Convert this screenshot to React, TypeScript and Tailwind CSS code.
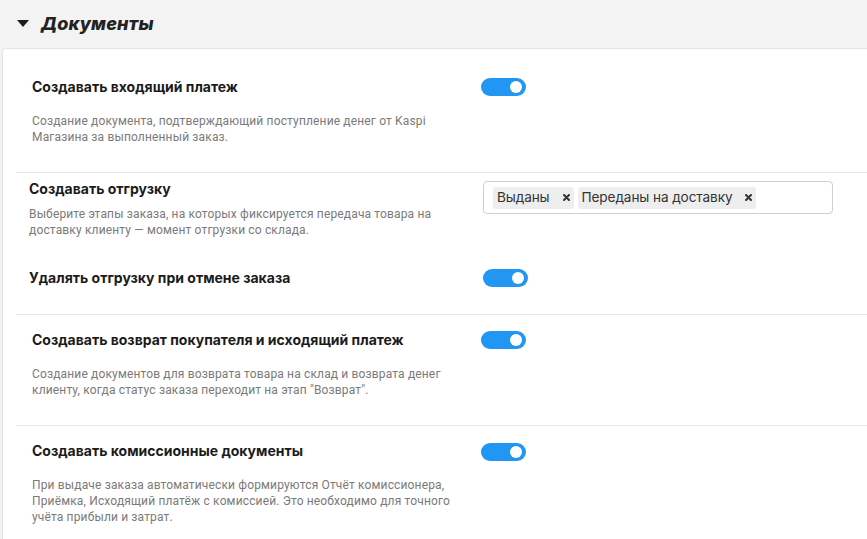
function Toggle() {
  return (
    <div className="w-[45px] h-[18px] rounded-full bg-[#2196f3] flex items-center justify-end pr-[4px] shrink-0">
      <div className="w-[12px] h-[12px] rounded-full bg-white" />
    </div>
  );
}

function Tag({ label }: { label: string }) {
  return (
    <div className="h-[22px] flex items-center bg-[#eeeeee] rounded-[3px] pl-[4px] pr-[4px]">
      <span className="text-[13.6px] text-[#333] tracking-[-0.1px]">{label}</span>
      <svg width="7" height="7" viewBox="0 0 7 7" className="ml-[13px]">
        <path d="M1 1 L6 6 M6 1 L1 6" stroke="#333" strokeWidth="2" strokeLinecap="round" />
      </svg>
    </div>
  );
}

const title = 'text-[14px] leading-[18px] font-bold text-[#1b1b1b]';
const desc = "font-['Roboto',_sans-serif] text-[12px] leading-[16px] tracking-[0.15px] text-[#7a7a7a]";

export default function App() {
  return (
    <div className="min-h-[539px] bg-[#f3f3f3] font-['Inter',_sans-serif] overflow-hidden">
      {/* Section header */}
      <div className="h-[48px] flex items-center pl-[17px] pb-[1px]">
        <svg width="12" height="7" viewBox="0 0 12 7" className="mr-[12px]">
          <path d="M0 0 L12 0 L6 7 Z" fill="#1e1e1e" />
        </svg>
        <h2 className="text-[18px] font-extrabold italic text-[#222] tracking-[0.2px]">Документы</h2>
      </div>

      {/* Panel */}
      <div className="ml-[2px] bg-white border-l border-t border-[#e4e4e4] rounded-tl-[4px] pl-[13px] pb-[20px]">
        {/* Row 1 */}
        <div className="flex pl-[16px] pt-[29px] pb-[27px] border-b border-[#e8e8e8]">
          <div className="w-[449px] shrink-0">
            <div className={title}>Создавать входящий платеж</div>
            <p className={`mt-[17px] ${desc}`}>
              Создание документа, подтверждающий поступление денег от Kaspi
              <br />
              Магазина за выполненный заказ.
            </p>
          </div>
          <Toggle />
        </div>

        {/* Row 2 */}
        <div className="flex pl-[13px] pt-[7px]">
          <div className="w-[454px] shrink-0">
            <div className={title}>Создавать отгрузку</div>
            <p className={`mt-[8px] ${desc}`}>
              Выберите этапы заказа, на которых фиксируется передача товара на
              <br />
              доставку клиенту — момент отгрузки со склада.
            </p>
          </div>
          <div className="mt-[1px] w-[350px] h-[33px] border border-[#cfcfcf] rounded-[4px] flex items-center gap-[4px] pl-[9px]">
            <Tag label="Выданы" />
            <Tag label="Переданы на доставку" />
          </div>
        </div>

        {/* Row 3 */}
        <div className="flex pl-[13px] pt-[31px] pb-[27px] border-b border-[#e8e8e8]">
          <div className="w-[454px] shrink-0">
            <div className={title}>Удалять отгрузку при отмене заказа</div>
          </div>
          <Toggle />
        </div>

        {/* Row 4 */}
        <div className="flex pl-[16px] pt-[16px] pb-[27px] border-b border-[#e8e8e8]">
          <div className="w-[449px] shrink-0">
            <div className={title}>Создавать возврат покупателя и исходящий платеж</div>
            <p className={`mt-[17px] ${desc}`}>
              Создание документов для возврата товара на склад и возврата денег
              <br />
              клиенту, когда статус заказа переходит на этап "Возврат".
            </p>
          </div>
          <Toggle />
        </div>

        {/* Row 5 */}
        <div className="flex pl-[16px] pt-[16px]">
          <div className="w-[449px] shrink-0">
            <div className={title}>Создавать комиссионные документы</div>
            <p className={`mt-[17px] ${desc} leading-[16.5px]`}>
              При выдаче заказа автоматически формируются Отчёт комиссионера,
              <br />
              Приёмка, Исходящий платёж с комиссией. Это необходимо для точного
              <br />
              учёта прибыли и затрат.
            </p>
          </div>
          <div className="mt-[1px]">
            <Toggle />
          </div>
        </div>
      </div>
    </div>
  );
}
